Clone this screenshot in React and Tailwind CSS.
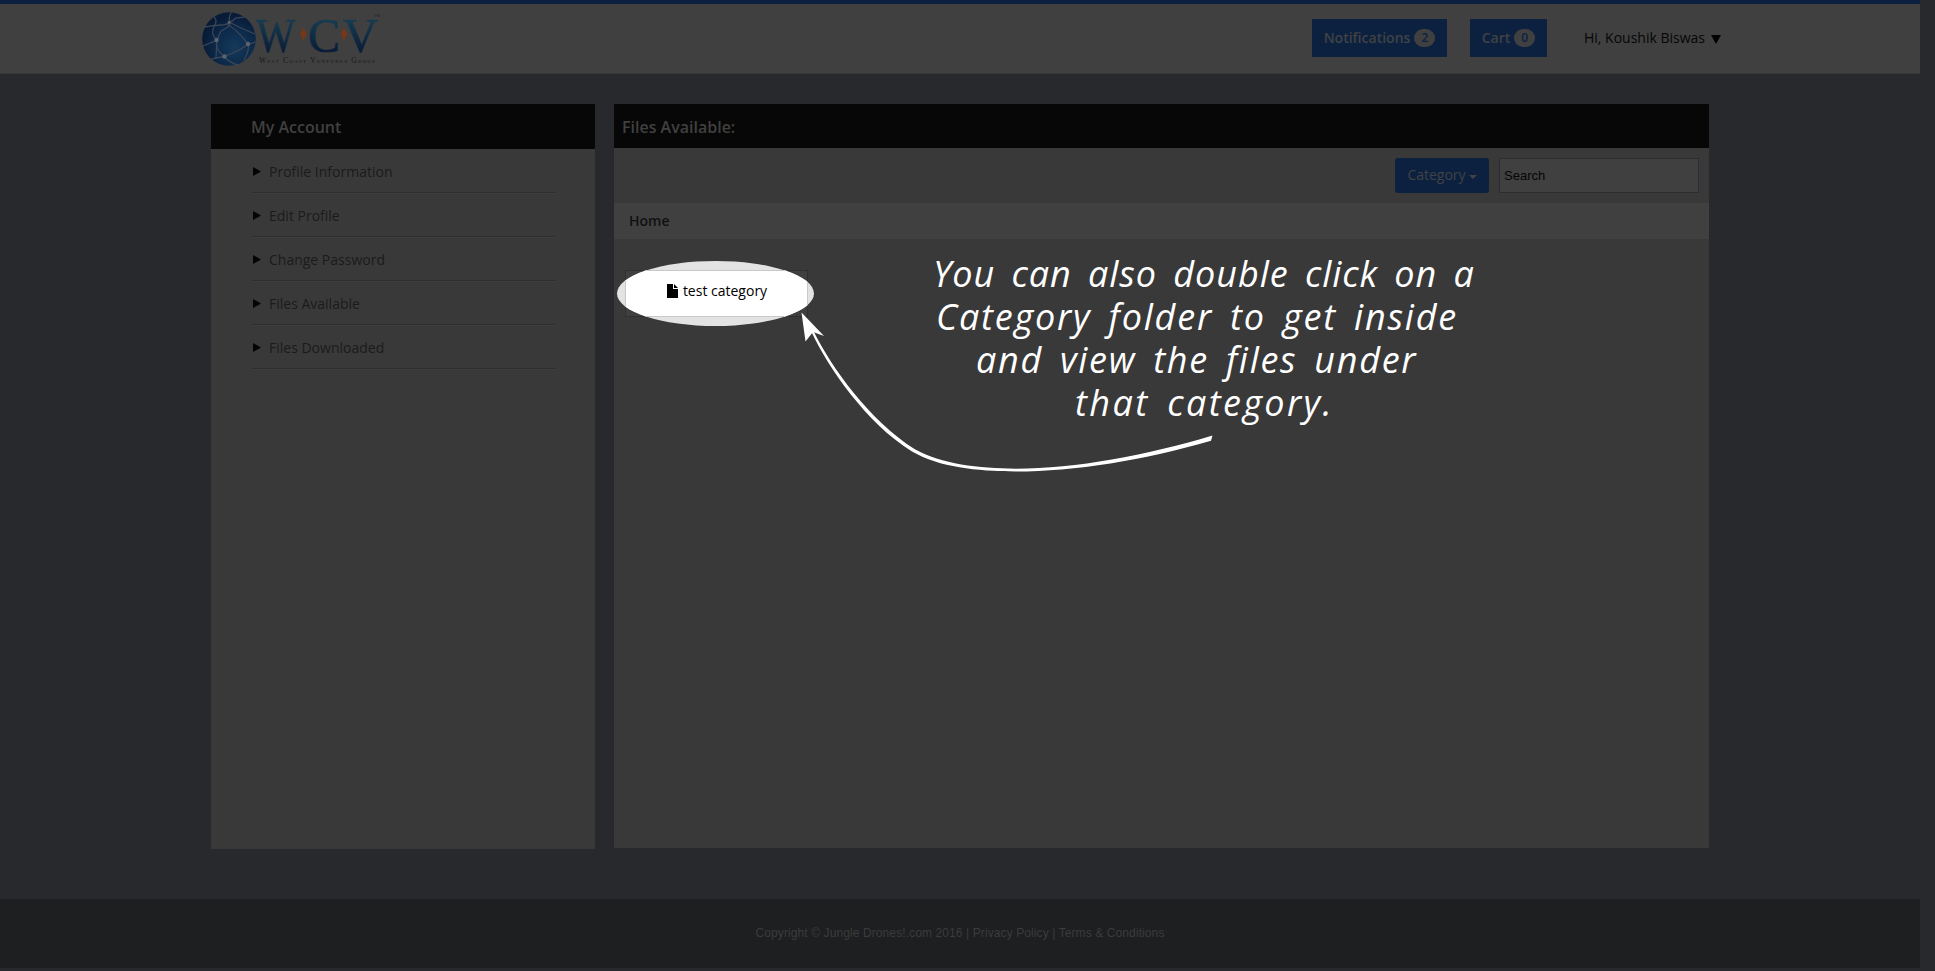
const menuItems = [
  'Profile Information',
  'Edit Profile',
  'Change Password',
  'Files Available',
  'Files Downloaded',
];

function Logo() {
  return (
    <svg className="ml-[201px] h-[66px] w-[184px] shrink-0" viewBox="201 7 184 66">
      <defs>
        <radialGradient id="globe" cx="0.6" cy="0.65" r="0.6">
          <stop offset="0" stopColor="#143a5a" />
          <stop offset="0.6" stopColor="#0c294a" />
          <stop offset="1" stopColor="#081a36" />
        </radialGradient>
        <linearGradient id="ink" x1="0" y1="0" x2="0" y2="1">
          <stop offset="0.2" stopColor="#173c50" />
          <stop offset="0.8" stopColor="#081d38" />
        </linearGradient>
      </defs>
      <circle cx="229" cy="39" r="26.8" fill="url(#globe)" />
      <g fill="none" stroke="#3a4656" strokeWidth="1.3" strokeLinecap="round">
        <path d="M204 27Q216 25 222 25T236 18L245 17" />
        <path d="M214 17Q218 20 214 27T217 40" />
        <path d="M231 13Q228 18 230 22T221 31L217 40" />
        <path d="M226 24Q236 28 248 44" />
        <path d="M229 22Q242 29 255 34" />
        <path d="M217 40Q208 44 203 46" />
        <path d="M217 40Q214 48 224 56.500" />
        <path d="M248 44Q240 51 224 56.500" />
        <path d="M248 44Q252 44 255 42" />
        <path d="M248 44Q250 50 244 60" />
        <path d="M224 56.500Q216 58 212 59" />
        <path d="M224 56.500Q230 63 238 65" />
        <path d="M217 40L216 58" />
      </g>
      <g fill="#59646e">
        <circle cx="216.500" cy="40" r="2.200" />
        <circle cx="248" cy="44" r="2.200" />
        <circle cx="224.500" cy="56.500" r="2.200" />
        <circle cx="229" cy="22.500" r="1.400" />
      </g>
      <g fontFamily="Liberation Serif, serif" fill="url(#ink)" stroke="url(#ink)" strokeWidth="0.7" fontSize="48">
        <text x="256" y="52" textLength="39" lengthAdjust="spacingAndGlyphs">W</text>
        <text x="308" y="52" textLength="32" lengthAdjust="spacingAndGlyphs">C</text>
        <text x="343" y="52" textLength="35" lengthAdjust="spacingAndGlyphs">V</text>
      </g>
      <path d="M303.500 27.500L306.500 34L303.500 40.500L300.500 34Z" fill="#7c3614" />
      <path d="M344 27.500L347 34L344 40.500L341 34Z" fill="#7c3614" />
      <text x="374" y="17" fontFamily="Liberation Sans, sans-serif" fontSize="4" fill="#1b2530">TM</text>
      <text
        x="259"
        y="63"
        fontFamily="Liberation Serif, serif"
        fontSize="7.500"
        fill="#15181a"
        textLength="116"
        style={{ fontVariantCaps: 'small-caps' }}
      >
        West Coast Ventures Group
      </text>
    </svg>
  );
}

function HeaderButton({ label, count, className }) {
  return (
    <div
      className={
        'mt-[15px] flex h-[38px] items-center justify-center gap-1 bg-[#0c2140] text-sm font-semibold text-[#404244] ' +
        className
      }
    >
      <span>{label}</span>
      <span className="flex h-[18px] w-[21px] items-center justify-center rounded-full bg-[#404040] text-xs font-semibold text-[#0c2140]">
        {count}
      </span>
    </div>
  );
}

function Header() {
  return (
    <header className="flex h-[74px] w-[1920px] items-start border-b border-t-4 border-b-[#363738] border-t-[#0c2140] bg-[#404040]">
      <div className="pt-[3px]">
        <Logo />
      </div>
      <HeaderButton label="Notifications" count="2" className="ml-[927px] w-[135px]" />
      <HeaderButton label="Cart" count="0" className="ml-[23px] w-[77px]" />
      <div className="ml-[37px] mt-[15px] flex h-[38px] items-center gap-1.5 text-sm text-[#060606]">
        <span className="whitespace-nowrap">Hi, Koushik Biswas</span>
        <svg className="mt-0.5 h-[9px] w-[10px]" viewBox="0 0 10 9">
          <path d="M0 0H10L5 9Z" fill="#020202" />
        </svg>
      </div>
    </header>
  );
}

function Sidebar() {
  return (
    <aside className="h-[745px] w-[384px] shrink-0 bg-[#393939]">
      <h2 className="flex h-[45px] items-center bg-[#070707] pl-10 text-base font-semibold text-[#404040]">
        My Account
      </h2>
      <ul className="ml-[41px] w-[303px] pt-px">
        {menuItems.map((item) => (
          <li
            key={item}
            className="flex h-11 items-center border-b border-[#3e3e3e] pl-px text-sm text-[#1b1b1b] shadow-[inset_0_-1px_0_#2e2e2e]"
          >
            <svg className="mr-2 h-[9px] w-2" viewBox="0 0 8 9">
              <path d="M0 0L8 4.500L0 9Z" fill="#040404" />
            </svg>
            {item}
          </li>
        ))}
      </ul>
    </aside>
  );
}

function FilesPanel() {
  return (
    <main className="h-[744px] w-[1095px] shrink-0 bg-[#393939]">
      <h2 className="flex h-11 items-center bg-[#070707] pl-2 pt-px text-base font-semibold text-[#404040]">
        Files Available:
      </h2>
      <div className="flex h-[55px] items-center justify-end gap-2.5 pr-2.5">
        <div className="flex h-[35px] w-[94px] items-center justify-center gap-[3px] rounded-[3px] bg-[#0c2140] pb-px text-sm text-[#404244]">
          Category
          <svg className="mt-1 h-1 w-2" viewBox="0 0 8 4">
            <path d="M0 0H8L4 4Z" fill="#404244" />
          </svg>
        </div>
        <div className="flex h-[35px] w-[200px] items-center border border-[#2c2d2e] bg-[#404040] pl-1 font-['Liberation_Sans',sans-serif] text-[13px] text-[#050505]">
          Search
        </div>
      </div>
      <div className="flex h-9 items-center bg-[#404040] pl-[15px] text-sm font-semibold text-[#101010]">Home</div>
      <div className="relative ml-[11px] mt-[31px] h-[47px] w-[183px] border border-[#303030] bg-[#3f3f3f]">
        <div className="absolute -left-[9px] -top-[10px] h-[65px] w-[197px] overflow-hidden rounded-[50%] bg-[#e3e3e3] pl-2 pt-[9px]">
          <div className="flex h-[47px] w-[183px] items-center justify-center border border-[#c8c8c8] bg-white pb-[5px] pl-px text-sm text-black">
            <svg className="mb-px mr-[5px] h-[14px] w-[11px]" viewBox="0 0 11 14">
              <path d="M0 0H6V5H11V14H0Z" fill="#000" />
              <path d="M7 0L11 4H7Z" fill="#000" />
            </svg>
            test category
          </div>
        </div>
      </div>
    </main>
  );
}

function Hint() {
  return (
    <>
      <div className="absolute left-[900px] top-[252px] whitespace-nowrap font-['Open_Sans',sans-serif] text-[36px] italic leading-[43px] text-white [word-spacing:6px]">
        <p className="ml-[33px] w-max tracking-[0.95px]">You can also double click on a</p>
        <p className="ml-[36px] w-max tracking-[1.8px]">Category folder to get inside</p>
        <p className="ml-[76px] w-max tracking-[1.7px]">and view the files under</p>
        <p className="ml-[175px] w-max tracking-[2.4px]">that category.</p>
      </div>
      <svg className="absolute left-[790px] top-[300px] h-[180px] w-[430px]" viewBox="790 300 430 180">
        <path d="M801.500 312.500L824 336L813 332L805.500 341.500Z" fill="#fff" />
        <path
          d="M811.500 332C828 367 866 423 912 451.500C940 467.500 976 471 1016 471.500C1074 471.500 1145 460 1211 440.700L1212.500 435.500C1146 455.500 1076 468.500 1016 468.700C978 468 942 464.500 914.500 449C870 421 831 367 813.500 331Z"
          fill="#fff"
        />
      </svg>
    </>
  );
}

export default function App() {
  return (
    <div className="relative h-[971px] w-full overflow-hidden bg-[#28292d] font-['Open_Sans',sans-serif]">
      <Header />
      <div className="flex h-[825px] items-start gap-[19px] pl-[211px] pt-[30px]">
        <Sidebar />
        <FilesPanel />
      </div>
      <footer className="flex h-[69px] w-[1920px] items-center justify-center bg-[#1e1f20] pb-0.5 font-['Liberation_Sans',sans-serif] text-xs tracking-[0.1px] text-[#3b3c3d]">
        Copyright © Jungle Drones!.com 2016 | Privacy Policy | Terms &amp; Conditions
      </footer>
      <Hint />
    </div>
  );
}
